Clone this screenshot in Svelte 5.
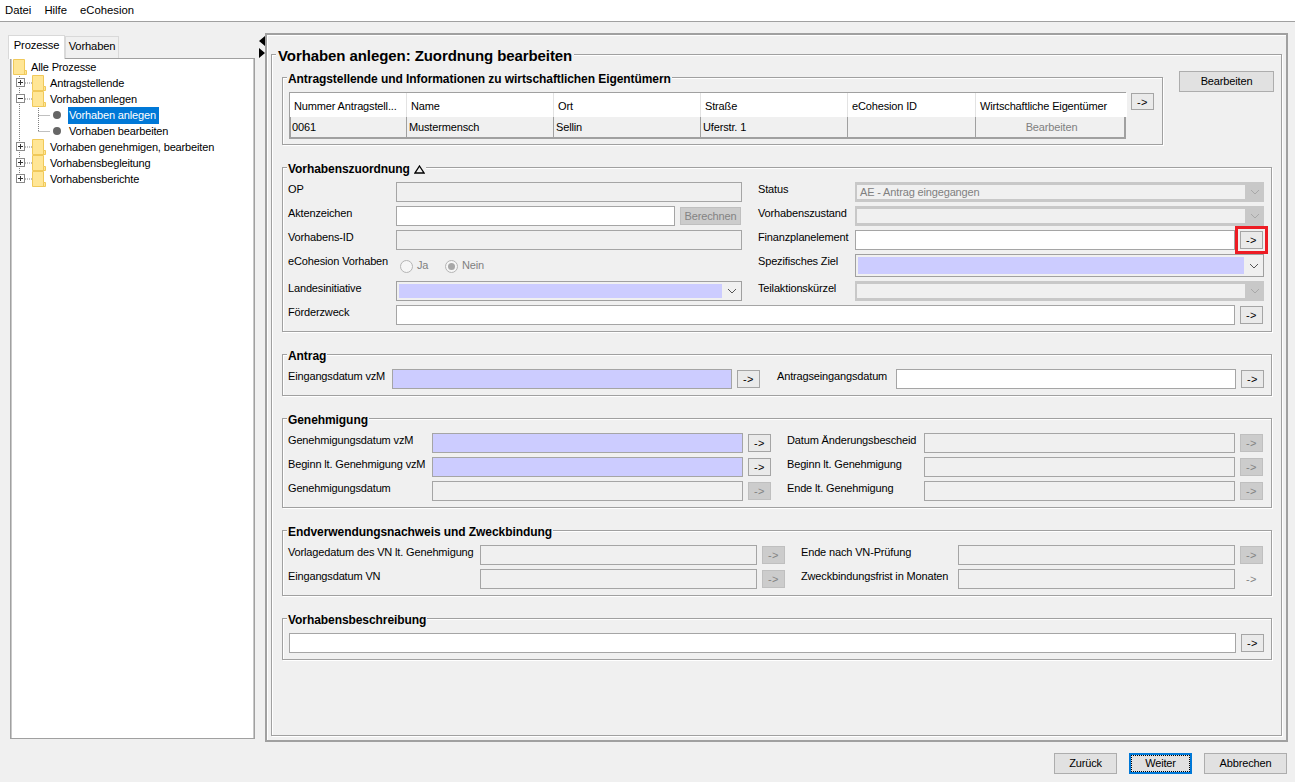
<script>
  const tree = [
    { label: 'Alle Prozesse', level: 0, icon: 'folder' },
    { label: 'Antragstellende', level: 1, icon: 'folder', handle: 'plus' },
    { label: 'Vorhaben anlegen', level: 1, icon: 'folder', handle: 'minus' },
    { label: 'Vorhaben anlegen', level: 2, icon: 'dot', selected: true },
    { label: 'Vorhaben bearbeiten', level: 2, icon: 'dot' },
    { label: 'Vorhaben genehmigen, bearbeiten', level: 1, icon: 'folder', handle: 'plus' },
    { label: 'Vorhabensbegleitung', level: 1, icon: 'folder', handle: 'plus' },
    { label: 'Vorhabensberichte', level: 1, icon: 'folder', handle: 'plus' }
  ];
  const columns = ['Nummer Antragstell...', 'Name', 'Ort', 'Straße', 'eCohesion ID', 'Wirtschaftliche Eigentümer'];
  const values = ['0061', 'Mustermensch', 'Sellin', 'Uferstr. 1', ''];
  const genehmigung = [
    ['Genehmigungsdatum vzM', 'req', 'on', 'Datum Änderungsbescheid', 'off', 'off'],
    ['Beginn lt. Genehmigung vzM', 'req', 'on', 'Beginn lt. Genehmigung', 'off', 'off'],
    ['Genehmigungsdatum', 'off', 'off', 'Ende lt. Genehmigung', 'off', 'off']
  ];
  const verwendung = [
    ['Vorlagedatum des VN lt. Genehmigung', 'off', 'off', 'Ende nach VN-Prüfung', 'off', 'off'],
    ['Eingangsdatum VN', 'off', 'off', 'Zweckbindungsfrist in Monaten', 'off', 'flat']
  ];
</script>

{#snippet arrow(state)}
  <button class="arrow {state}" type="button">-&gt;</button>
{/snippet}

{#snippet input(state)}
  <span class="input {state}"></span>
{/snippet}

{#snippet withArrow(inputState, arrowState)}
  <div class="with-arrow">
    {@render input(inputState)}
    {@render arrow(arrowState)}
  </div>
{/snippet}

{#snippet select(kind, text = '')}
  <div class="select {kind}">
    <span class="select-value">{text}</span>
    <svg class="chevron" viewBox="0 0 10 6" width="10" height="6"><path d="M1 1l4 4 4-4" fill="none" stroke="currentColor" stroke-width="1" /></svg>
  </div>
{/snippet}

<div class="app">
  <nav class="menubar">
    <span>Datei</span><span>Hilfe</span><span>eCohesion</span>
  </nav>

  <div class="workspace">
    <aside class="sidebar">
      <div class="tabs">
        <span class="tab active">Prozesse</span>
        <span class="tab">Vorhaben</span>
      </div>
      <div class="tree">
        <svg class="tree-lines" width="70" height="140" aria-hidden="true">
          <path d="M6.5 17V120M12 24h7M12 40h7M12 88h7M12 104h7M12 120h7M25.5 47V72.500M25.5 56.500h12M25.500 72.500h12" fill="none" stroke="#808080" stroke-dasharray="1 1" />
        </svg>
        {#each tree as node}
          <div class="node level-{node.level}">
            {#if node.handle}
              <span class="handle">
                <svg viewBox="0 0 9 9" width="9" height="9"><rect x=".5" y=".5" width="8" height="8" fill="#fff" stroke="#8a8a8a" /><path d={node.handle === 'plus' ? 'M2 4.500h5M4.500 2v5' : 'M2 4.500h5'} stroke="#333" /></svg>
              </span>
            {/if}
            {#if node.icon === 'folder'}
              <svg class="folder" viewBox="0 0 14 16" width="14" height="16"><path d="M.5.500H11.500V11.500H13.500V15.500H.5z" fill="#ffe696" stroke="#f0c95a" /><path d="M11.500 11.500v4" stroke="#f0c95a" /></svg>
            {:else}
              <span class="dot"></span>
            {/if}
            <span class="node-label" class:selected={node.selected}>{node.label}</span>
          </div>
        {/each}
      </div>
    </aside>

    <div class="splitter">
      <svg viewBox="0 0 6 22" width="6" height="22"><path d="M6 0v10L0 5zM0 12l6 5-6 5z" fill="#000" /></svg>
    </div>

    <main class="frame">
      <section class="page">
        <h1 class="page-title">Vorhaben anlegen: Zuordnung bearbeiten</h1>

        <div class="top-row">
          <section class="group g-owner">
            <h2>Antragstellende und Informationen zu wirtschaftlichen Eigentümern</h2>
            <div class="owner-row">
              <div class="table">
                {#each columns as col}
                  <div class="th">{col}</div>
                {/each}
                {#each values as val}
                  <div class="td">{val}</div>
                {/each}
                <div class="td link">Bearbeiten</div>
              </div>
              <div class="owner-arrow">{@render arrow('on')}</div>
            </div>
          </section>
          <button class="btn edit" type="button">Bearbeiten</button>
        </div>

        <section class="group g-assign">
          <h2>Vorhabenszuordnung <svg class="delta" viewBox="0 0 11 9" width="11" height="9"><path d="M5.500 1L10 8H1z" fill="none" stroke="#000" stroke-width="1.300" /></svg></h2>
          <div class="assign-grid">
            <span class="label">OP</span>
            {@render input('off')}
            <span class="label lab2">Status</span>
            {@render select('disabled', 'AE - Antrag eingegangen')}

            <span class="label">Aktenzeichen</span>
            <div class="with-calc">
              {@render input('on')}
              <button class="calc" type="button">Berechnen</button>
            </div>
            <span class="label lab2">Vorhabenszustand</span>
            {@render select('disabled')}

            <span class="label">Vorhabens-ID</span>
            {@render input('off')}
            <span class="label lab2">Finanzplanelement</span>
            <div class="with-arrow highlighted">
              {@render input('on')}
              {@render arrow('on')}
              <span class="marker"></span>
            </div>

            <span class="label">eCohesion Vorhaben</span>
            <div class="radios">
              <span class="radio"></span><span class="radio-text">Ja</span>
              <span class="radio checked"></span><span class="radio-text">Nein</span>
            </div>
            <span class="label lab2">Spezifisches Ziel</span>
            {@render select('required tall')}

            <span class="label">Landesinitiative</span>
            {@render select('required')}
            <span class="label lab2">Teilaktionskürzel</span>
            {@render select('disabled')}

            <span class="label">Förderzweck</span>
            <div class="span-all">{@render withArrow('on', 'on')}</div>
          </div>
        </section>

        <section class="group g-antrag">
          <h2>Antrag</h2>
          <div class="pairs">
            <span class="label">Eingangsdatum vzM</span>
            {@render withArrow('req', 'on')}
            <span class="label lab2">Antragseingangsdatum</span>
            {@render withArrow('on', 'on')}
          </div>
        </section>

        <section class="group g-geneh">
          <h2>Genehmigung</h2>
          <div class="pairs">
            {#each genehmigung as r}
              <span class="label">{r[0]}</span>
              {@render withArrow(r[1], r[2])}
              <span class="label lab2">{r[3]}</span>
              {@render withArrow(r[4], r[5])}
            {/each}
          </div>
        </section>

        <section class="group g-verw">
          <h2>Endverwendungsnachweis und Zweckbindung</h2>
          <div class="pairs">
            {#each verwendung as r}
              <span class="label">{r[0]}</span>
              {@render withArrow(r[1], r[2])}
              <span class="label lab2">{r[3]}</span>
              {@render withArrow(r[4], r[5])}
            {/each}
          </div>
        </section>

        <section class="group g-desc">
          <h2>Vorhabensbeschreibung</h2>
          {@render withArrow('on', 'on')}
        </section>
      </section>
    </main>
  </div>

  <footer class="footer">
    <button class="btn" type="button">Zurück</button>
    <button class="btn primary" type="button"><span>Weiter</span></button>
    <button class="btn cancel" type="button">Abbrechen</button>
  </footer>
</div>

<style>
  :global(body) { margin: 0; }
  .app {
    width: 1295px;
    height: 782px;
    overflow: hidden;
    background: #f0f0f0;
    color: #000;
    font: 11px/13px "Liberation Sans", Arial, sans-serif;
    letter-spacing: -.15px;
    display: flex;
    flex-direction: column;
  }
  button { font: inherit; letter-spacing: inherit; color: inherit; padding: 0; margin: 0; cursor: default; }

  .menubar {
    height: 21px;
    flex: none;
    background: #fff;
    border-bottom: 1px solid #a0a0a0;
    display: flex;
    align-items: center;
    gap: 13px;
    padding-left: 5px;
    font-size: 11.300px;
    letter-spacing: 0;
  }

  .workspace { display: flex; height: 721px; flex: none; }

  .sidebar { width: 247px; margin-left: 8px; padding-top: 12px; flex: none; display: flex; flex-direction: column; }
  .tabs { display: flex; align-items: flex-end; height: 24px; flex: none; }
  .tab {
    box-sizing: border-box;
    height: 22px;
    width: 54px;
    border: 1px solid #d9d9d9;
    border-bottom: 0;
    text-align: center;
    line-height: 18px;
    font-size: 11.200px;
  }
  .tab.active { height: 24px; width: 57px; background: #fff; line-height: 19px; position: relative; z-index: 1; margin-bottom: -1px; }
  .tree {
    position: relative;
    margin: 0 0 0 2px;
    height: 681px;
    box-sizing: border-box;
    background: #fff;
    border: 1px solid #a0a0a0;
    box-shadow: inset 1px 0 0 #c8c8c8, inset -1px 0 0 #c8c8c8;
  }
  .tree-lines { position: absolute; left: 2px; top: 0; }
  .node { position: relative; display: flex; align-items: center; height: 16px; }
  .node.level-0 { padding-left: 2px; }
  .node.level-1 { padding-left: 21px; }
  .node.level-2 { padding-left: 42px; }
  .handle { position: absolute; left: 5px; top: 3px; display: flex; z-index: 1; }
  .folder { flex: none; margin-right: 3px; position: relative; }
  .dot { width: 8px; height: 8px; border-radius: 50%; background: #666; margin-right: 7px; position: relative; }
  .node-label { padding: 2px 1px; white-space: nowrap; }
  .node-label.selected { background: #0078d7; color: #fff; padding-right: 3px; }

  .splitter { width: 10px; flex: none; padding: 3px 0 0 4px; box-sizing: border-box; display: flex; align-items: flex-start; margin-top: 11px; }
  .frame {
    box-sizing: border-box;
    width: 1023px;
    margin-top: 11px;
    height: 709px;
    flex: none;
    border: 2px solid #a0a0a0;
    box-shadow: inset 1px 1px 0 #fff;
    padding: 19px 4px 4px 4px;
  }
  .page {
    position: relative;
    box-sizing: border-box;
    height: 682px;
    border: 1px solid #a0a0a0;
    box-shadow: 1px 1px 0 #fff, inset 1px 1px 0 #fff;
    padding: 22px 0 0 10px;
    display: flex;
    flex-direction: column;
    gap: 22px;
  }
  .page-title {
    position: absolute;
    left: 4px;
    top: -8px;
    margin: 0;
    padding: 0 2px;
    background: #f0f0f0;
    font-size: 15px;
    line-height: 18px;
    font-weight: bold;
    letter-spacing: -.08px;
    white-space: nowrap;
  }
  .top-row { display: flex; align-items: flex-start; height: 68px; }
  .group {
    position: relative;
    box-sizing: border-box;
    width: 990px;
    border: 1px solid #a0a0a0;
    box-shadow: 1px 1px 0 #fff, inset 1px 1px 0 #fff;
    flex: none;
  }
  .group h2 {
    position: absolute;
    left: 4px;
    top: -6px;
    margin: 0;
    padding: 0 1px;
    background: #f0f0f0;
    font-size: 12px;
    line-height: 14px;
    font-weight: bold;
    letter-spacing: -.07px;
    white-space: nowrap;
  }
  .delta { vertical-align: -1px; margin-left: 1px; }

  .g-owner { width: 881px; height: 68px; padding: 14px 0 0 6px; }
  .owner-row { display: flex; align-items: flex-start; }
  .owner-arrow { margin: 0 0 0 5px; }
  .owner-arrow .arrow { display: block; height: 17px; }
  .edit { width: 95px; height: 21px; margin: -6px 0 0 16px; }

  .table {
    display: grid;
    grid-template-columns: 117px 147px 147px 147px 128px 151px;
    grid-template-rows: 24px 20px;
    width: 837px;
    box-sizing: border-box;
    border: 1px solid #a0a0a0;
    border-width: 1px 2px 2px 1px;
    box-shadow: inset 1px 0 0 #a0a0a0;
  }
  .th {
    background: #fff;
    padding-left: 4px;
    line-height: 26px;
    border-right: 1px solid #e3e3e3;
    white-space: nowrap;
  }
  .td {
    padding-left: 2px;
    line-height: 21px;
    border-right: 1px solid #a0a0a0;
    white-space: nowrap;
  }
  .td:last-child, .th:nth-child(6) { border-right: 0; }
  .td.link { text-align: center; color: #808080; padding-left: 0; }

  .g-assign { height: 165px; padding: 14px 0 0 5px; }
  .assign-grid {
    display: grid;
    grid-template-columns: 108px 346px 113px 409px;
    grid-template-rows: 20px 20px 20px 23px 20px 20px;
    row-gap: 4px;
  }
  .assign-grid .with-arrow { margin-right: 1px; }
  .span-all { grid-column: 2 / -1; }
  .label { white-space: nowrap; display: block; padding-top: 1px; }
  .lab2 { padding-left: 16px; }

  .input {
    display: block;
    box-sizing: border-box;
    height: 20px;
    flex: 1;
    min-width: 0;
    border: 1px solid #a5a5a5;
  }
  .input.on { background: #fff; }
  .input.off { background: #f0f0f0; }
  .input.req { background: #ccccff; }

  .with-arrow { display: flex; gap: 5px; height: 20px; position: relative; }
  .arrow {
    flex: none;
    box-sizing: border-box;
    width: 23px;
    height: 18px;
    margin-top: 1px;
    border: 1px solid #a5a5a5;
    background: #eaeaea;
    line-height: 14px;
    text-align: center;
    letter-spacing: .4px;
  }
  .arrow.off { background: #cccccc; border-color: #bfbfbf; color: #838383; }
  .arrow.flat { background: none; border-color: transparent; color: #838383; }
  .marker {
    position: absolute;
    right: -5px;
    top: -4px;
    box-sizing: border-box;
    width: 33px;
    height: 28px;
    border: 3px solid #ed1c24;
  }

  .with-calc { display: flex; gap: 5px; width: 345px; }
  .calc {
    width: 61px;
    height: 18px;
    margin-top: 1px;
    flex: none;
    background: #cccccc;
    border: 1px solid #bfbfbf;
    color: #838383;
    line-height: 14px;
  }

  .radios { display: flex; align-items: center; height: 23px; padding-left: 4px; color: #808080; }
  .radio {
    box-sizing: border-box;
    width: 13px;
    height: 13px;
    border-radius: 50%;
    border: 1px solid #b5b5b5;
    background: #f6f6f6;
    position: relative;
    margin-top: 1px;
  }
  .radio.checked::after {
    content: "";
    position: absolute;
    inset: 2px;
    border-radius: 50%;
    background: #a8a8a8;
  }
  .radio-text { margin-left: 4px; width: 28px; }

  .select {
    box-sizing: border-box;
    display: flex;
    height: 20px;
    align-items: stretch;
    position: relative;
  }
  .select.tall { height: 23px; }
  .select.disabled { border: 2px solid #c8c8c8; border-width: 3px 0 3px 2px; background: #c8c8c8; color: #808080; }
  .select.required { border: 1px solid #a0a0a0; background: #f0f0f0; padding: 2px 0 2px 2px; }
  .select.required .select-value { background: #ccccff; }
  .select-value { flex: 1; background: #f0f0f0; padding-left: 3px; line-height: 14px; white-space: nowrap; }
  .chevron { width: 10px; align-self: center; flex: none; margin: 0 4px 0 5px; color: #555; }
  .select.disabled .chevron { color: #a8a8a8; }

  .pairs { display: grid; row-gap: 4px; grid-auto-rows: 20px; }
  .g-antrag { height: 42px; padding: 14px 0 0 5px; }
  .g-antrag .pairs { grid-template-columns: 104px 368px 136px 368px; }
  .g-antrag .lab2 { padding-left: 17px; }
  .g-geneh { height: 90px; padding: 14px 0 0 5px; }
  .g-geneh .pairs { grid-template-columns: 144px 339px 153px 339px; }
  .g-verw { height: 66px; padding: 14px 0 0 5px; }
  .g-verw .pairs { grid-template-columns: 192px 305px 173px 305px; }
  .g-desc { height: 42px; padding: 14px 7px 0 6px; }

  .btn {
    box-sizing: border-box;
    height: 21px;
    border: 1px solid #adadad;
    background: #e1e1e1;
    line-height: 17px;
    text-align: center;
  }
  .footer {
    flex: none;
    display: flex;
    justify-content: flex-end;
    gap: 12px;
    padding: 10px 8px 0 0;
  }
  .footer .btn { width: 63px; }
  .footer .cancel { width: 83px; }
  .footer .primary { border: 2px solid #0078d7; padding: 0; }
  .primary span { display: block; height: 100%; box-sizing: border-box; border: 1px dotted #000; line-height: 15px; }
</style>
